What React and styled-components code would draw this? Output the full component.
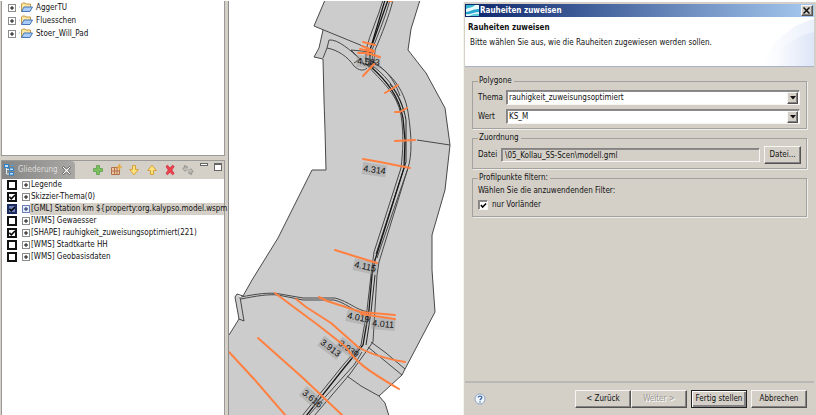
import React from "react";
import styled, { createGlobalStyle, css } from "styled-components";

const face = "#d4d0c8";
const shadow = "#848284";
const ui = '"DejaVu Sans Condensed", "Noto Sans", sans-serif';

const GlobalStyle = createGlobalStyle`
  *, *::before, *::after { box-sizing: border-box; }
  body { margin: 0; background: #fff; color: #111; font: 8px/12px ${ui}; }
  button, input, select { font: inherit; color: inherit; margin: 0; }
  svg { flex: none; }
`;

const Workbench = styled.div`
  display: grid;
  grid-template-columns: 229px minmax(0, 234fr) minmax(0, 353fr);
  min-height: 100vh;
  padding-top: 1px;
  overflow: hidden;
`;

const Sidebar = styled.div`
  display: grid;
  grid-template-rows: 155px minmax(0, 1fr);
  gap: 4px;
  min-width: 0;
  padding: 0 3px 0 1px;
  background: ${face};
  border-right: 1px solid #8c8c8c;
`;

const View = styled.section`
  display: flex;
  flex-direction: column;
  min-width: 0;
  background: #fff;
  border: 1px solid #9a9a98;
  border-width: ${(p) => (p.$bottom ? "1px 1px 0" : "0 1px 1px")};
`;

const Tree = styled.ul`
  margin: 0;
  padding: ${(p) => (p.$roomy ? "0 0 0 6px" : "0 0 0 5px")};
  list-style: none;
`;

const FolderRow = styled.li`
  display: flex;
  align-items: center;
  gap: 3px;
  height: 13px;
`;

const ThemeRow = styled.li`
  display: flex;
  align-items: center;
  height: 12px;
  white-space: nowrap;
`;

const ThemeLabel = styled.label`
  flex: 1;
  min-width: 0;
  height: 12px;
  padding-left: 1px;
  background: ${(p) => (p.$selected ? face : "transparent")};
`;

const tick = css`
  background-image: url("data:image/svg+xml,%3Csvg xmlns='http://www.w3.org/2000/svg' viewBox='0 0 8 8'%3E%3Cpath d='M1 3.5 3 5.8 7 1.6' fill='none' stroke='black' stroke-width='1.7'/%3E%3C/svg%3E");
  background-repeat: no-repeat;
  background-position: center;
  background-size: 7px 7px;
`;

const ThemeCheck = styled.input`
  appearance: none;
  flex: none;
  width: 10px;
  height: 10px;
  border: 2px solid ${(p) => (p.$selected ? "#1b2a5c" : "#111")};
  background-color: ${(p) => (p.$selected ? "#6b80b8" : "#fff")};
  &:checked { ${tick} }
`;

const Expander = styled.button`
  display: flex;
  flex: none;
  margin-left: ${(p) => (p.$gap ? "5px" : "0")};
  padding: 0;
  border: 0;
  background: none;
`;

const TabBar = styled.header`
  display: flex;
  height: 18px;
  background: ${face};
`;

const Tab = styled.div`
  display: flex;
  align-items: center;
  gap: 3px;
  width: 73px;
  padding: 0 4px 0 2px;
  border-radius: 0 4px 0 0;
  background: linear-gradient(90deg, #858585, #a9a8a4);
  color: #dededc;
`;

const TabTitle = styled.h2`
  flex: 1;
  margin: 0;
  font-size: 8px;
  font-weight: 400;
`;

const Tools = styled.div`
  display: flex;
  flex: 1;
  align-items: center;
  justify-content: flex-end;
  gap: 6px;
  padding-right: 2px;
`;

const ToolButton = styled.button`
  display: flex;
  align-self: ${(p) => (p.$top ? "flex-start" : "auto")};
  padding: ${(p) => (p.$top ? "1px 0 0" : "0")};
  border: 0;
  background: none;
`;

const MapCanvas = styled.svg`
  display: block;
  width: 100%;
  height: auto;
  align-self: start;
  background: #fff;
`;

const Dialog = styled.section`
  display: flex;
  flex-direction: column;
  min-width: 0;
  margin-top: 1px;
  padding: 2px 1px 0 0;
  background: ${face};
  border-left: 1px solid #f4f3ee;
`;

const TitleBar = styled.header`
  display: flex;
  align-items: center;
  gap: 1px;
  height: 13px;
  margin: 0 1px;
  padding: 0 1px 0 1px;
  background: linear-gradient(90deg, #0a246a, #a6caf0);
  color: #fff;
`;

const TitleText = styled.h1`
  flex: 1;
  margin: 0;
  font-size: 8px;
  font-weight: 700;
`;

const raised = css`
  border: 1px solid;
  border-color: #f6f5f1 #55534f #55534f #f6f5f1;
  box-shadow: inset -1px -1px ${shadow};
  background: ${face};
`;

const CloseButton = styled.button`
  ${raised}
  display: grid;
  place-items: center;
  width: 12px;
  height: 11px;
  padding: 0 1px 1px 0;
`;

const Banner = styled.div`
  display: flex;
  justify-content: space-between;
  height: 50px;
  margin: 0 1px;
  background: #fff;
  border-bottom: 1px solid #aab3c6;
`;

const BannerText = styled.div`
  padding: 5px 0 0 3px;
  white-space: nowrap;
`;

const BannerTitle = styled.h2`
  margin: 0;
  font-size: 8px;
  line-height: 12px;
`;

const BannerNote = styled.p`
  margin: 3px 0 0 2px;
`;

const BannerArt = styled.svg`
  flex: none;
  width: 56px;
  height: 49px;
`;

const Form = styled.form`
  display: flex;
  flex: 1;
  flex-direction: column;
`;

const Groups = styled.div`
  display: flex;
  flex: 1;
  flex-direction: column;
  gap: 3px;
  padding: 8px 8px 0 8px;
`;

const Group = styled.fieldset`
  display: flex;
  flex-direction: column;
  gap: ${(p) => p.$gap || "0"};
  min-width: 0;
  margin: 0;
  padding: ${(p) => p.$pad};
  border: 1px solid #a3a29f;
  box-shadow: 1px 1px #f0eeea;
`;

const Legend = styled.legend`
  height: 12px;
  padding: 0 2px 0 1px;
`;

const Field = styled.div`
  display: grid;
  grid-template-columns: ${(p) => p.$cols};
  align-items: center;
`;

const FileField = styled(Field)`
  column-gap: 4px;
`;

const sunken = css`
  border: 1px solid;
  border-color: ${shadow} #f6f5f1 #f6f5f1 ${shadow};
  box-shadow: inset 1px 1px #8f8d89;
`;

const Combo = styled.div`
  ${sunken}
  display: grid;
  align-items: center;
  height: 15px;
  padding: 1px;
  background: #fff;
  & > * { grid-area: 1 / 1; }
`;

const Select = styled.select`
  appearance: none;
  width: 100%;
  height: 12px;
  padding: 0 14px 0 1px;
  border: 0;
  background: none;
  line-height: 12px;
`;

const Arrow = styled.span`
  ${raised}
  display: grid;
  place-items: center;
  justify-self: end;
  width: 11px;
  height: 12px;
  pointer-events: none;
`;

const PathInput = styled.input`
  ${sunken}
  width: 100%;
  min-width: 0;
  height: 14px;
  padding: 0 3px;
  background: ${face};
`;

const PushButton = styled.button`
  ${raised}
  width: ${(p) => p.$width || "56px"};
  height: 18px;
  padding: 0;
  white-space: nowrap;
  ${(p) => p.$default && css`
    outline: 1px solid #222;
    outline-offset: -1px;
    box-shadow: inset 1px 1px #fff, inset -2px -2px ${shadow};
  `}
  &:disabled { color: #9b9893; text-shadow: 1px 1px #fff; }
`;

const Hint = styled.p`
  margin: 0;
`;

const Option = styled.label`
  display: flex;
  align-items: center;
  gap: 4px;
`;

const FilterCheck = styled.input`
  ${sunken}
  appearance: none;
  width: 10px;
  height: 10px;
  background-color: #fff;
  &:checked { ${tick} }
`;

const Footer = styled.footer`
  display: flex;
  align-items: center;
  gap: 4px;
  margin: 0 1px 0 1px;
  padding: 7px 7px 7px 9px;
  border-top: 2px solid #bab8b4;
`;

const HelpButton = styled.button`
  display: flex;
  margin-right: auto;
  padding: 0;
  border: 0;
  background: none;
`;

const ButtonPair = styled.div`
  display: flex;
`;

const PlusBox = ({ tint }) => (
  <svg width="8" height="8" viewBox="0 0 8 8">
    <rect x=".5" y=".5" width="7" height="7" fill={tint ? "#e6ecfa" : "#fff"} stroke={tint ? "#6b80b8" : "#8c8c8c"} />
    <path d="M2 4h4M4 2v4" stroke={tint ? "#1b2a5c" : "#111"} />
  </svg>
);

const FolderIcon = () => (
  <svg width="14" height="11" viewBox="0 0 14 11">
    <path d="M0 5h2" stroke="#bbb" strokeDasharray="1 1" />
    <path d="M2.5 9.500V2l1-1H6l1 1h4.500v3" fill="#fbe7a4" stroke="#c39a45" />
    <path d="M2.500 9.500 5 5h8.500L11 9.500z" fill="#a9cdf8" stroke="#4775b8" />
  </svg>
);

const OutlineIcon = () => (
  <svg width="11" height="12" viewBox="0 0 11 12">
    <path d="M2.500 2v8M2.500 5.500H6M2.500 10H6" fill="none" stroke="#d6ecff" />
    <rect x=".5" y=".5" width="4" height="3" fill="#bfe3ff" stroke="#2f7fc4" />
    <rect x="5.500" y="4" width="4" height="2.500" fill="#bfe3ff" stroke="#2f7fc4" />
    <rect x="5.500" y="8.500" width="4" height="2.500" fill="#bfe3ff" stroke="#2f7fc4" />
    <path d="M6.500 1.500H10" stroke="#4c9ddb" />
  </svg>
);

const TabClose = () => (
  <svg width="9" height="9" viewBox="0 0 9 9">
    <path d="M.5 1.500 1.500.5 4.500 3 7.500.5 8.500 1.500 6 4.500 8.500 7.500 7.500 8.500 4.500 6 1.500 8.500.5 7.500 3 4.500z" fill="#fff" stroke="#444" strokeWidth=".8" />
  </svg>
);

const Glyph = ({ children }) => (
  <svg width="12" height="12" viewBox="0 0 12 12">{children}</svg>
);

const tools = [
  ["Hinzufügen", <path d="M4.500 1.500h3v3h3v3h-3v3h-3v-3h-3v-3h3z" fill="#7cc05c" stroke="#5aa04c" strokeWidth=".8" />],
  ["Neues Thema", <g><path d="M1.500 3.500h8v7h-8zM1.500 7h8M4.500 3.500v7M7 3.500v7" fill="#f0c8a4" stroke="#b0704c" /><path d="M9.500 0v6M6.500 3h5.500" stroke="#e8a840" strokeWidth="1.500" /></g>],
  ["Nach unten", <path d="M4.500 1.500h3v4h2.800L6 10.800 1.700 5.500h2.800z" fill="#fde37c" stroke="#d8a038" />],
  ["Nach oben", <path d="M4.500 10.500h3v-4h2.800L6 1.200 1.700 6.500h2.800z" fill="#fde37c" stroke="#d8a038" />],
  ["Entfernen", <path d="M2 2.500 3.500 1.200 6 4 8.500 1.200 10.200 2.500 7.800 6 10.200 9.500 8.500 10.800 6 8 3.500 10.800 2 9.500 4.200 6z" fill="#ee3f4c" stroke="#d02c3c" strokeWidth=".7" />],
  ["Verknüpfen", <g fill="none" stroke="#a09e98" strokeWidth="1.200"><path d="M5.500 5.500 3 7 1 4.500 3.500 2 6 3.500M2.500 1v3H6" /><path d="M6.500 6.500 9 5l2 2.500L8.500 10 6 8.500M9.500 11V8H6" /></g>],
];

const MinimizeIcon = () => (
  <svg width="8" height="10" viewBox="0 0 8 10"><rect x=".5" y="1.500" width="7" height="2" fill="#fff" stroke="#666" /></svg>
);
const MaximizeIcon = () => (
  <svg width="8" height="10" viewBox="0 0 8 10"><rect x=".5" y="1.500" width="7" height="7" fill="#fff" stroke="#666" /><path d="M0 2.500h8" stroke="#666" /></svg>
);

const AppIcon = () => (
  <svg width="13" height="13" viewBox="0 0 13 13">
    <rect y="1" width="13" height="11" fill="#e9fafc" />
    <path d="M0 1h9C7 4 3 3 0 5z" fill="#35b5d2" />
    <path d="M0 8c4 0 6-3 13-3v3C8 8 5 11 0 10z" fill="#27a6d0" />
    <path d="M3 12c3-1 5-3 10-2v2z" fill="#58cfdc" />
  </svg>
);

const HelpIcon = () => (
  <svg width="12" height="12" viewBox="0 0 12 12">
    <circle cx="6" cy="6" r="5" fill="#f4f8fd" stroke="#8ba4c4" />
    <path d="M4.200 4.600C4.200 2.600 7.900 2.600 7.900 4.600 7.900 5.900 6 5.800 6 7.300M6 8.300v1.300" fill="none" stroke="#3a66a8" strokeWidth="1.300" />
  </svg>
);

const folders = ["AggerTU", "Fluesschen", "Stoer_Will_Pad"];

const themes = [
  { name: "Legende" },
  { name: "Skizzier-Thema(0)", checked: true },
  { name: "[GML] Station km ${property:org.kalypso.model.wspm", checked: true, selected: true },
  { name: "[WMS] Gewaesser" },
  { name: "[SHAPE] rauhigkeit_zuweisungsoptimiert(221)", checked: true },
  { name: "[WMS] Stadtkarte HH" },
  { name: "[WMS] Geobasisdaten" },
];

const stations = [
  { km: "4.583", x: 128, y: 64, turn: 4 },
  { km: "4.314", x: 134, y: 171, turn: 8 },
  { km: "4.115", x: 125, y: 267, turn: 12 },
  { km: "4.019", x: 118, y: 318, turn: 12 },
  { km: "4.011", x: 143, y: 326, turn: 5 },
  { km: "3.939", x: 109, y: 344, turn: 36 },
  { km: "3.913", x: 91, y: 343, turn: 37 },
  { km: "3.616", x: 73, y: 393, turn: 40 },
];

const RiverMap = () => (
  <MapCanvas viewBox="1 1 234 414" role="img" aria-label="Karte">
    <path
      d="M97 0 86 26 95 30 91 49 86 57 95 59 96 100 97 130 98 170H84L50 238 24 280 15 296 13 298 9 294 7 297 11 319 1 335V416H161L157 403 151 396 174 375 177 369 207 312 204 270V235L217 190 222 145 217 108 198 73 180 50 183 29 192 0z"
      fill="#ccc"
    />
    <g fill="none" stroke="#484848" strokeWidth="1">
      <path d="M97 0 86 26 142 49M95 30 91 48 86 57 95 59 96 100 97 130 98 170H84L50 238 24 280 15 296M11 319 1 335M161 416 157 403 151 396 174 375 177 369 207 312 204 270V235L217 190 222 145 217 108 198 73 180 50 183 29 192 0" />
      <path d="M15 296 9 294 7 297 11 319 16 321 12 297M95 58 99 48 101 40C110 39 122 50 132 59L126 63M99 48C110 50 120 57 126 66 131 71 136 71 139 68" />
      <path d="M123 50 144 52M123 50 133 60M133 59 137 66" />
      <path d="M13 299C28 296 40 294 50 295L75 300 106 300C118 303 124 310 136 314M13 297C28 294 42 292 52 294L75 298 107 298C122 302 126 309 140 312" />
      <path d="M155 0C150 18 142 33 138 50L138 64C154 82 169 93 173 115 176 135 175 150 173 168L146 252 143 275 139 310 133 345 116 364 74 416" />
      <path d="M165 0C161 16 154 34 147 50L146 62C161 73 176 87 180 112 184 138 184 155 180 168L151 262 149 275 145 342 122 374 86 416" />
      <path d="M162 0C157 18 151 32 144 50L145 66C162 79 172 95 176 112M180 168 149 258" />
      <path d="M143 342 158 353 177 369M140 347 174 375M119 376 133 386 151 396M189 140 222 145" />
      <path d="M149 65C161 72 168 84 172 96M134 352 126 365 80 416" />
    </g>
    <g fill="none" stroke="#161616" strokeWidth="1.300">
      <path d="M157 0 142 50 142 66C160 82 171 97 175 118L177 140 176 168 147 260 144 275 141 310 135 345 116 368 78 416" />
      <path d="M160 0 144 45M137 58l10 5-8 2 7 3-12-5" />
      <path d="M162 84C171 96 176 108 178 120V162L148 254" strokeWidth=".9" />
      <path d="M147 275 143 312 138 345" strokeWidth=".9" />
    </g>
    <g fontFamily='"Liberation Sans", Arial, sans-serif' fontSize="9" fill="#111">
      {stations.map((s) => (
        <g key={s.km} transform={`translate(${s.x} ${s.y}) rotate(${s.turn})`}>
          <rect x="0" y="-9" width="24" height="12" fill="#999" fillOpacity=".4" />
          <text x="1" y="0">{s.km}</text>
        </g>
      ))}
    </g>
    <g fill="none" stroke="#ff8040" strokeWidth="2" strokeLinecap="round" strokeLinejoin="round">
      <path d="M135 42 147 45M134 46 146 51M132 49 146 52M130 53 139 53 152 57M140 48v7M161 1h3" />
      <path d="M135 76 146 64M157 93 170 85M167 112H172L179 108M167 141 187 140" />
      <path d="M135 159 152 162 182 168M107 250 126 256 149 263" />
      <path d="M91 297 99 301 133 312 167 315M133 314 167 319" />
      <path d="M68 299 78 307 103 323 130 347C142 354 154 358 177 362" />
      <path d="M47 293 63 305 90 325 118 347C128 362 137 369 171 389" />
      <path d="M30 338 75 378 114 415M1 352 26 379 58 416" />
    </g>
  </MapCanvas>
);

const DownArrow = () => (
  <svg width="6" height="4" viewBox="0 0 6 4"><path d="M0 0h6L3 3.500z" fill="#111" /></svg>
);

const ComboField = ({ id, label, options }) => (
  <Field $cols="28px minmax(0, 1fr)">
    <label htmlFor={id}>{label}</label>
    <Combo>
      <Select id={id}>
        {options.map((o) => <option key={o}>{o}</option>)}
      </Select>
      <Arrow><DownArrow /></Arrow>
    </Combo>
  </Field>
);

const ThemeItem = ({ name, checked, selected, id }) => (
  <ThemeRow>
    <ThemeCheck id={id} type="checkbox" defaultChecked={checked} $selected={selected} />
    <Expander $gap aria-label="Aufklappen"><PlusBox tint={selected} /></Expander>
    <ThemeLabel htmlFor={id} $selected={selected}>{name}</ThemeLabel>
  </ThemeRow>
);

export default function App() {
  return (
    <>
      <GlobalStyle />
      <Workbench>
        <Sidebar>
          <View>
            <Tree $roomy>
              {folders.map((f) => (
                <FolderRow key={f}>
                  <Expander aria-label="Aufklappen"><PlusBox /></Expander>
                  <FolderIcon />
                  <span>{f}</span>
                </FolderRow>
              ))}
            </Tree>
          </View>
          <View $bottom>
            <TabBar>
              <Tab>
                <OutlineIcon />
                <TabTitle>Gliederung</TabTitle>
                <ToolButton aria-label="Schließen"><TabClose /></ToolButton>
              </Tab>
              <Tools>
                {tools.map(([label, drawing]) => (
                  <ToolButton key={label} aria-label={label}><Glyph>{drawing}</Glyph></ToolButton>
                ))}
                <ToolButton $top aria-label="Minimieren"><MinimizeIcon /></ToolButton>
                <ToolButton $top aria-label="Maximieren"><MaximizeIcon /></ToolButton>
              </Tools>
            </TabBar>
            <Tree>
              {themes.map((t, i) => <ThemeItem key={t.name} id={`theme-${i}`} {...t} />)}
            </Tree>
          </View>
        </Sidebar>

        <RiverMap />

        <Dialog>
          <TitleBar>
            <AppIcon />
            <TitleText>Rauheiten zuweisen</TitleText>
            <CloseButton aria-label="Schließen">
              <svg width="7" height="7" viewBox="0 0 7 7"><path d="M.5.5l6 6M6.500.5l-6 6" stroke="#111" strokeWidth="1.500" /></svg>
            </CloseButton>
          </TitleBar>
          <Banner>
            <BannerText>
              <BannerTitle>Rauheiten zuweisen</BannerTitle>
              <BannerNote>Bitte wählen Sie aus, wie die Rauheiten zugewiesen werden sollen.</BannerNote>
            </BannerText>
            <BannerArt viewBox="0 0 56 49">
              <defs>
                <linearGradient id="sweep"><stop offset="0" stopColor="#fff" /><stop offset="1" stopColor="#dde5f7" /></linearGradient>
                <linearGradient id="halo"><stop offset="0" stopColor="#fff" /><stop offset="1" stopColor="#eaf0fb" /></linearGradient>
              </defs>
              <path d="M4 49C14 24 32 8 56 2V49z" fill="url(#halo)" />
              <path d="M12 49C20 32 34 20 56 15V49z" fill="url(#sweep)" />
            </BannerArt>
          </Banner>
          <Form onSubmit={(e) => e.preventDefault()}>
            <Groups>
              <Group $gap="4px" $pad="3px 6px 4px 5px">
                <Legend>Polygone</Legend>
                <ComboField id="thema" label="Thema" options={["rauhigkeit_zuweisungsoptimiert"]} />
                <ComboField id="wert" label="Wert" options={["KS_M"]} />
              </Group>
              <Group $pad="2px 5px 4px 5px">
                <Legend>Zuordnung</Legend>
                <FileField $cols="19px minmax(0, 1fr) 37px">
                  <label htmlFor="datei">Datei</label>
                  <PathInput id="datei" readOnly defaultValue="\05_Kollau_SS-Scen\modell.gml" />
                  <PushButton type="button" $width="100%">Datei...</PushButton>
                </FileField>
              </Group>
              <Group $gap="2px" $pad="1px 5px 5px 5px">
                <Legend>Profilpunkte filtern:</Legend>
                <Hint>Wählen Sie die anzuwendenden Filter:</Hint>
                <Option>
                  <FilterCheck type="checkbox" defaultChecked />
                  nur Vorländer
                </Option>
              </Group>
            </Groups>
            <Footer>
              <HelpButton type="button" aria-label="Hilfe"><HelpIcon /></HelpButton>
              <ButtonPair>
                <PushButton type="button">&lt; Zurück</PushButton>
                <PushButton type="button" disabled>Weiter &gt;</PushButton>
              </ButtonPair>
              <PushButton type="submit" $default>Fertig stellen</PushButton>
              <PushButton type="button">Abbrechen</PushButton>
            </Footer>
          </Form>
        </Dialog>
      </Workbench>
    </>
  );
}
